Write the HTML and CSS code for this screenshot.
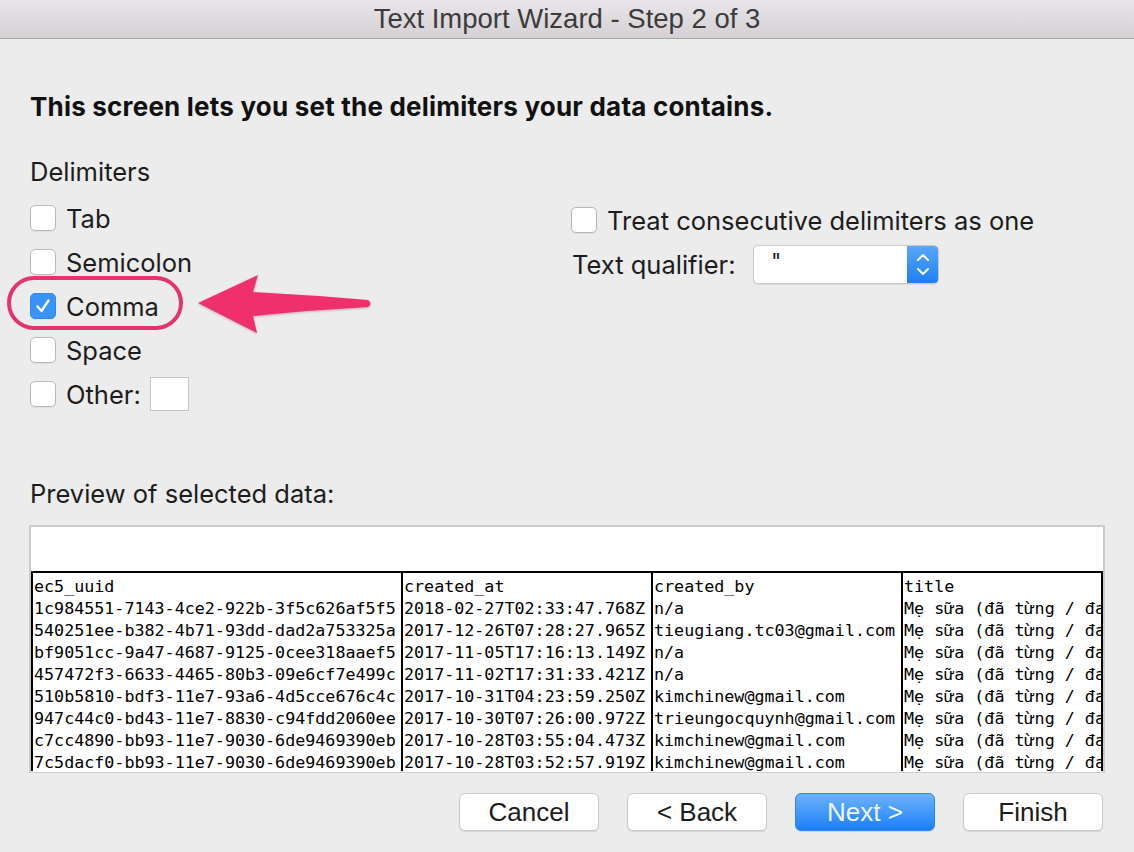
FILE: index.html
```html
<!DOCTYPE html>
<html lang="en">
<head>
<meta charset="utf-8">
<title>Text Import Wizard - Step 2 of 3</title>
<link rel="stylesheet" href="styles.css">
</head>
<body>
<div class="window">
  <header class="titlebar">Text Import Wizard - Step 2 of 3</header>
  <main class="content">
    <h1 class="intro">This screen lets you set the delimiters your data contains.</h1>
    <div class="section-label">Delimiters</div>
    <div class="options">
      <div class="col-left">
        <label class="opt"><span class="cb"></span>Tab</label>
        <label class="opt"><span class="cb"></span>Semicolon</label>
        <label class="opt"><span class="cb checked"><svg viewBox="0 0 26 26" width="26" height="26"><path d="M7.5 13.5 L11.5 18 L18.5 7.5" fill="none" stroke="#fff" stroke-width="2.4" stroke-linecap="round" stroke-linejoin="round"/></svg></span>Comma</label>
        <label class="opt"><span class="cb"></span>Space</label>
        <label class="opt"><span class="cb"></span>Other:<span class="other-input"></span></label>
      </div>
      <div class="col-right">
        <label class="opt opt-right"><span class="cb"></span>Treat consecutive delimiters as one</label>
        <div class="qualifier">
          <span class="q-label">Text qualifier:</span>
          <div class="select">
            <span class="select-value">"</span>
            <span class="stepper"><svg viewBox="0 0 32 39" width="32" height="39"><path d="M11 15 L16 10 L21 15" fill="none" stroke="#fff" stroke-width="2" stroke-linecap="round" stroke-linejoin="round"/><path d="M11 24 L16 29 L21 24" fill="none" stroke="#fff" stroke-width="2" stroke-linecap="round" stroke-linejoin="round"/></svg></span>
          </div>
        </div>
      </div>
      <div class="highlight"></div>
      <svg class="arrow" viewBox="0 0 190 75" width="190" height="75"><path d="M8 37 L68 9 L63 26 Q120 29 178 34 Q183 37.5 178 41 Q120 44 63 50 L67 67 Z" fill="#f0306c"/></svg>
    </div>
    <div class="section-label preview-label">Preview of selected data:</div>
    <div class="preview">
      <div class="preview-blank"></div>
      <div class="grid">
        <div class="cell">ec5_uuid</div><div class="cell">created_at</div><div class="cell">created_by</div><div class="cell">title</div>
        <div class="cell">1c984551-7143-4ce2-922b-3f5c626af5f5</div><div class="cell">2018-02-27T02:33:47.768Z</div><div class="cell">n/a</div><div class="cell">Mẹ sữa (đã từng / đang cho con bú)</div>
        <div class="cell">540251ee-b382-4b71-93dd-dad2a753325a</div><div class="cell">2017-12-26T07:28:27.965Z</div><div class="cell">tieugiang.tc03@gmail.com</div><div class="cell">Mẹ sữa (đã từng / đang cho con bú)</div>
        <div class="cell">bf9051cc-9a47-4687-9125-0cee318aaef5</div><div class="cell">2017-11-05T17:16:13.149Z</div><div class="cell">n/a</div><div class="cell">Mẹ sữa (đã từng / đang cho con bú)</div>
        <div class="cell">457472f3-6633-4465-80b3-09e6cf7e499c</div><div class="cell">2017-11-02T17:31:33.421Z</div><div class="cell">n/a</div><div class="cell">Mẹ sữa (đã từng / đang cho con bú)</div>
        <div class="cell">510b5810-bdf3-11e7-93a6-4d5cce676c4c</div><div class="cell">2017-10-31T04:23:59.250Z</div><div class="cell">kimchinew@gmail.com</div><div class="cell">Mẹ sữa (đã từng / đang cho con bú)</div>
        <div class="cell">947c44c0-bd43-11e7-8830-c94fdd2060ee</div><div class="cell">2017-10-30T07:26:00.972Z</div><div class="cell">trieungocquynh@gmail.com</div><div class="cell">Mẹ sữa (đã từng / đang cho con bú)</div>
        <div class="cell">c7cc4890-bb93-11e7-9030-6de9469390eb</div><div class="cell">2017-10-28T03:55:04.473Z</div><div class="cell">kimchinew@gmail.com</div><div class="cell">Mẹ sữa (đã từng / đang cho con bú)</div>
        <div class="cell">7c5dacf0-bb93-11e7-9030-6de9469390eb</div><div class="cell">2017-10-28T03:52:57.919Z</div><div class="cell">kimchinew@gmail.com</div><div class="cell">Mẹ sữa (đã từng / đang cho con bú)</div>
      </div>
    </div>
    <div class="buttons">
      <button class="btn">Cancel</button>
      <button class="btn">&lt; Back</button>
      <button class="btn primary">Next &gt;</button>
      <button class="btn">Finish</button>
    </div>
  </main>
</div>
</body>
</html>
```

FILE: styles.css
```css
* { box-sizing: border-box; }
html, body { margin: 0; padding: 0; }
body {
  width: 1134px;
  height: 852px;
  overflow: hidden;
  background: #ececec;
  font-family: Inter, "Liberation Sans", Arial, sans-serif;
  color: #1c1c1c;
}
.window { width: 1134px; height: 852px; }
.titlebar {
  height: 39px;
  line-height: 37px;
  text-align: center;
  font-family: "Liberation Sans", Arial, sans-serif;
  font-size: 27.5px;
  color: #3b3b3b;
  background: linear-gradient(#e9e6e9, #d4d0d4);
  border-bottom: 1px solid #a6a6a6;
}
.content { padding: 0 31px 0 30px; }
.intro {
  margin: 54px 0 0;
  font-size: 26px;
  line-height: 28px;
  font-weight: bold;
  letter-spacing: 0.2px;
  color: #111;
}
.section-label {
  margin-top: 37px;
  font-size: 25.5px;
  line-height: 28px;
}
.options {
  position: relative;
  margin-top: 10px;
  display: grid;
  grid-template-columns: 541px 1fr;
}
.opt {
  display: flex;
  align-items: center;
  height: 44px;
  font-size: 25.5px;
}
.cb {
  width: 26px;
  height: 26px;
  border: 1px solid #b8b8b8;
  border-radius: 5px;
  background: #fff;
  margin-right: 10px;
  box-shadow: 0 1px 1px rgba(0,0,0,0.06);
  flex: none;
}
.cb svg { display: block; margin: -1px; }
.cb.checked {
  background: #3a93f6;
  border-color: #3586e6;
}
.other-input {
  width: 39px;
  height: 34px;
  margin-left: 9px;
  background: #fff;
  border: 1px solid #c6c6c6;
}
.col-right { padding-top: 2px; }
.qualifier {
  display: flex;
  align-items: center;
  margin-top: 3px;
  height: 39px;
}
.q-label { font-size: 25.5px; width: 182px; padding-left: 1px; }
.select {
  width: 186px;
  height: 39px;
  display: flex;
  background: #fff;
  border: 1px solid #c9c9c9;
  border-radius: 5px;
  box-shadow: 0 1px 1px rgba(0,0,0,0.08);
  overflow: hidden;
}
.select-value {
  flex: 1;
  font-size: 22px;
  padding-left: 17px;
  line-height: 30px;
}
.stepper {
  width: 32px;
  background: linear-gradient(#5ba8fa, #1c7ef4);
  margin: -1px -1px -1px 0;
}
.stepper svg { display: block; }
.highlight {
  position: absolute;
  left: -23px;
  top: 80px;
  width: 176px;
  height: 54px;
  border: 4px solid #e5346d;
  border-radius: 27px;
}
.arrow {
  position: absolute;
  left: 160px;
  top: 70px;
  filter: drop-shadow(0 1px 1px rgba(120,0,40,0.3));
}
.preview-label { margin-top: 64px; }
.preview {
  margin: 17px 0 0 -1px;
  width: 1076px;
  height: 248px;
  background: #fff;
  border: 2px solid #cbcbcb;
  border-bottom: 1px solid #cfcfcf;
  overflow: hidden;
}
.preview-blank { height: 44px; }
.grid {
  display: grid;
  grid-template-columns: 368px 250px 250px 1fr;
  border: 2px solid #000;
  border-bottom: none;
  font-family: "DejaVu Sans Mono", "Liberation Mono", monospace;
  font-size: 16.7px;
  color: #000;
}
.cell {
  height: 22px;
  line-height: 22px;
  padding: 2px 0 0 1px;
  white-space: nowrap;
  overflow-x: clip;
  overflow-y: visible;
}
.cell:not(:nth-child(4n+1)) { border-left: 2px solid #000; }
.buttons {
  display: flex;
  justify-content: flex-end;
  gap: 28px;
  margin-top: 20px;
}
.btn {
  width: 140px;
  height: 38px;
  font-family: "Liberation Sans", Arial, sans-serif;
  font-size: 26px;
  line-height: 36px;
  color: #1c1c1c;
  background: #fff;
  border: 1px solid #c9c9c9;
  border-radius: 6px;
  box-shadow: 0 1px 1px rgba(0,0,0,0.1);
  padding: 0;
}
.btn.primary {
  background: linear-gradient(#6db3fb, #1b7ff8);
  border-color: #2f86ec;
  color: #f0f6ff;
}
```
